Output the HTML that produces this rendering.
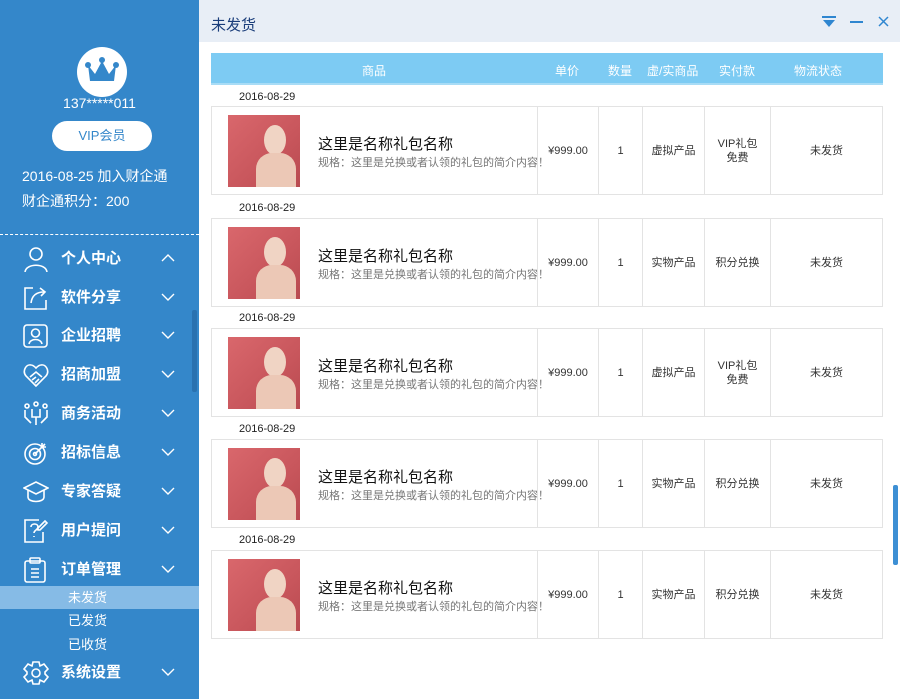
<!DOCTYPE html>
<html><head><meta charset="utf-8"><style>
*{margin:0;padding:0;box-sizing:border-box}
body{width:900px;height:699px;overflow:hidden;font-family:"Liberation Sans","Noto Sans CJK SC",sans-serif;background:#fff;position:relative}
.sb{position:absolute;left:0;top:0;width:199px;height:699px;background:#3487ca;color:#fff}
.a{position:absolute}
.menu{position:absolute;left:0;width:199px;height:30px}
.menu .t{position:absolute;left:61px;top:3px;font-size:15px;font-weight:bold}
.menu svg.ic{position:absolute;left:23px;top:2px}
.menu .ch{position:absolute;left:160px;top:9px}
.sub{position:absolute;left:0;width:199px;height:23px;font-size:13px;padding-left:68px;line-height:23px}
.main{position:absolute;left:199px;top:0;width:701px;height:699px}
.hdr{position:absolute;left:0;top:0;width:701px;height:42px;background:#e8eef6}
.th{position:absolute;left:12px;top:53px;width:672px;height:32px;background:#7dcbf3;color:#fff;font-size:12px;border-bottom:2px solid #a8dcf6}
.th span{position:absolute;top:9px}
.date{position:absolute;left:40px;font-size:11px;color:#222}
.row{position:absolute;left:12px;width:672px;height:89px;border:1px solid #e3e3e3;font-size:11px;color:#333}
.row .c{position:absolute;top:0;height:87px;border-left:1px solid #e3e3e3;display:flex;align-items:center;justify-content:center;text-align:center;line-height:14px}
.img{position:absolute;left:16px;top:8px;width:72px;height:72px;background:linear-gradient(135deg,#d9676c,#c8565c 60%,#b84a50);overflow:hidden}
.img:before{content:"";position:absolute;left:36px;top:10px;width:22px;height:30px;border-radius:50%;background:#f0d4c4}
.img:after{content:"";position:absolute;left:28px;top:38px;width:40px;height:40px;border-radius:40% 40% 0 0;background:#ecc8b6}
.nm{position:absolute;left:106px;top:26px;font-size:15px;color:#111}
.sp{position:absolute;left:106px;top:47px;font-size:11px;color:#777}
</style></head><body>
<div class="sb">
 <div class="a" style="left:77px;top:47px;width:50px;height:50px;border-radius:50%;background:#fff"></div>
 <svg class="a" style="left:84px;top:55px" width="36" height="30" viewBox="0 0 36 30"><path d="M4 10 L11 19 L18 6 L25 19 L32 10 L30 26 L6 26Z" fill="#3487ca"/><circle cx="4" cy="10" r="3" fill="#3487ca"/><circle cx="18" cy="5" r="3" fill="#3487ca"/><circle cx="32" cy="10" r="3" fill="#3487ca"/></svg>
 <div class="a" style="left:0;width:199px;top:95px;text-align:center;font-size:14px">137*****011</div>
 <div class="a" style="left:52px;top:121px;width:100px;height:30px;border-radius:15px;background:#fff;color:#3487ca;font-size:13px;text-align:center;line-height:30px">VIP会员</div>
 <div class="a" style="left:22px;top:166px;font-size:14px">2016-08-25 加入财企通</div>
 <div class="a" style="left:22px;top:191px;font-size:14px">财企通积分：200</div>
 <div class="a" style="left:0;top:234px;width:199px;border-top:1px dashed #fff"></div>
 <div class="a" style="left:192px;top:310px;width:5px;height:82px;background:#2a72b0;border-radius:2px"></div>

 <div class="menu" style="top:244px"><svg class="ic" width="26" height="26" fill="none" stroke="#fff" stroke-width="1.6"><circle cx="13" cy="8" r="6"/><path d="M2 26 C3 17 23 17 24 26"/></svg><span class="t">个人中心</span><svg class="ch" width="16" height="10" fill="none" stroke="#fff" stroke-width="1.4"><path d="M2 8 L8 2 L14 8"/></svg></div>
 <div class="menu" style="top:283px"><svg class="ic" width="26" height="26" fill="none" stroke="#fff" stroke-width="1.6"><path d="M10 3 H2 V24 H23 V15"/><path d="M8 18 C9 10 14 7 21 7"/><path d="M17 3 L22 7 L18 11"/></svg><span class="t">软件分享</span><svg class="ch" width="16" height="10" fill="none" stroke="#fff" stroke-width="1.4"><path d="M2 2 L8 8 L14 2"/></svg></div>
 <div class="menu" style="top:321px"><svg class="ic" width="26" height="26" fill="none" stroke="#fff" stroke-width="1.6"><rect x="1" y="2" width="23" height="22" rx="3"/><circle cx="12.5" cy="10" r="4"/><path d="M6 21 C7 15 18 15 19 21"/></svg><span class="t">企业招聘</span><svg class="ch" width="16" height="10" fill="none" stroke="#fff" stroke-width="1.4"><path d="M2 2 L8 8 L14 2"/></svg></div>
 <div class="menu" style="top:360px"><svg class="ic" width="26" height="26" fill="none" stroke="#fff" stroke-width="1.6"><path d="M13 24 L3 14 C-1 9 3 2 8 3 C10 3 12 5 13 6 C14 5 16 3 18 3 C23 2 27 9 23 14Z"/><path d="M7 15 L13 10 L19 15 M9 18 L13 15 M12 21 L16 17"/></svg><span class="t">招商加盟</span><svg class="ch" width="16" height="10" fill="none" stroke="#fff" stroke-width="1.4"><path d="M2 2 L8 8 L14 2"/></svg></div>
 <div class="menu" style="top:399px"><svg class="ic" width="26" height="26" fill="none" stroke="#fff" stroke-width="1.6"><circle cx="4" cy="5" r="2"/><circle cx="13" cy="3" r="2"/><circle cx="22" cy="5" r="2"/><path d="M2 9 V16 L8 22 M24 9 V16 L18 22 M9 8 V16 H17 V8 M13 16 V24"/></svg><span class="t">商务活动</span><svg class="ch" width="16" height="10" fill="none" stroke="#fff" stroke-width="1.4"><path d="M2 2 L8 8 L14 2"/></svg></div>
 <div class="menu" style="top:438px"><svg class="ic" width="26" height="26" fill="none" stroke="#fff" stroke-width="1.6"><circle cx="12" cy="14" r="10"/><circle cx="12" cy="14" r="5.5"/><circle cx="12" cy="14" r="1.5"/><path d="M12 14 L22 4 M19 3 V7 H23"/></svg><span class="t">招标信息</span><svg class="ch" width="16" height="10" fill="none" stroke="#fff" stroke-width="1.4"><path d="M2 2 L8 8 L14 2"/></svg></div>
 <div class="menu" style="top:477px"><svg class="ic" width="26" height="26" fill="none" stroke="#fff" stroke-width="1.6"><path d="M1 9 L13 3 L25 9 L13 15Z"/><path d="M5 11 V18 C5 24 21 24 21 18 V11"/></svg><span class="t">专家答疑</span><svg class="ch" width="16" height="10" fill="none" stroke="#fff" stroke-width="1.4"><path d="M2 2 L8 8 L14 2"/></svg></div>
 <div class="menu" style="top:516px"><svg class="ic" width="26" height="26" fill="none" stroke="#fff" stroke-width="1.6"><path d="M20 14 V24 H2 V2 H16"/><path d="M8 9 C8 5 15 5 15 9 C15 12 11 12 11 15 M11 18 V19"/><path d="M22 3 L24 5 L17 12 L15 12 L15 10Z"/></svg><span class="t">用户提问</span><svg class="ch" width="16" height="10" fill="none" stroke="#fff" stroke-width="1.4"><path d="M2 2 L8 8 L14 2"/></svg></div>
 <div class="menu" style="top:555px"><svg class="ic" width="26" height="26" fill="none" stroke="#fff" stroke-width="1.6"><rect x="2" y="4" width="20" height="21" rx="2"/><rect x="7" y="1" width="10" height="5" rx="1"/><path d="M8 12 H16 M8 16 H16 M8 20 H16"/></svg><span class="t">订单管理</span><svg class="ch" width="16" height="10" fill="none" stroke="#fff" stroke-width="1.4"><path d="M2 2 L8 8 L14 2"/></svg></div>
 <div class="sub" style="top:586px;background:#86bbe6">未发货</div>
 <div class="sub" style="top:609px">已发货</div>
 <div class="sub" style="top:633px">已收货</div>
 <div class="menu" style="top:658px"><svg class="ic" width="26" height="26" fill="none" stroke="#fff" stroke-width="1.6"><path d="M10 2 H16 L17 6 L21 4 L25 9 L22 12 V14 L25 17 L21 22 L17 20 L16 24 H10 L9 20 L5 22 L1 17 L4 14 V12 L1 9 L5 4 L9 6Z"/><circle cx="13" cy="13" r="4"/></svg><span class="t">系统设置</span><svg class="ch" width="16" height="10" fill="none" stroke="#fff" stroke-width="1.4"><path d="M2 2 L8 8 L14 2"/></svg></div>
</div>

<div class="main">
 <div class="hdr"><div class="a" style="left:12px;top:14px;font-size:15px;color:#1a3d7a">未发货</div>
  <svg class="a" style="left:623px;top:16px" width="14" height="12"><rect x="0" y="0" width="14" height="2" fill="#2f86d0"/><path d="M1 4 H13 L7 11Z" fill="#2f86d0"/></svg>
  <div class="a" style="left:651px;top:21px;width:13px;height:2px;background:#2f86d0"></div>
  <svg class="a" style="left:679px;top:16px" width="11" height="11" stroke="#2f86d0" stroke-width="1.5"><path d="M1 1 L10 10 M10 1 L1 10"/></svg>
 </div>
 <div class="a" style="left:694px;top:485px;width:5px;height:80px;background:#3d8fd4;border-radius:2px"></div>
 <div class="th"><span style="left:151px">商品</span><span style="left:344px">单价</span><span style="left:397px">数量</span><span style="left:436px">虚/实商品</span><span style="left:508px">实付款</span><span style="left:583px">物流状态</span></div>
 
 <div class="date" style="top:91px">2016-08-29</div>
 <div class="row" style="top:106px"><div class="img"></div><div class="nm">这里是名称礼包名称</div><div class="sp">规格：这里是兑换或者认领的礼包的简介内容！</div>
 <div class="c" style="left:325px;width:61px">¥999.00</div><div class="c" style="left:386px;width:44px">1</div><div class="c" style="left:430px;width:62px">虚拟产品</div><div class="c" style="left:492px;width:66px">VIP礼包<br>免费</div><div class="c" style="left:558px;width:112px">未发货</div></div>

 <div class="date" style="top:202px">2016-08-29</div>
 <div class="row" style="top:218px"><div class="img"></div><div class="nm">这里是名称礼包名称</div><div class="sp">规格：这里是兑换或者认领的礼包的简介内容！</div>
 <div class="c" style="left:325px;width:61px">¥999.00</div><div class="c" style="left:386px;width:44px">1</div><div class="c" style="left:430px;width:62px">实物产品</div><div class="c" style="left:492px;width:66px">积分兑换</div><div class="c" style="left:558px;width:112px">未发货</div></div>

 <div class="date" style="top:312px">2016-08-29</div>
 <div class="row" style="top:328px"><div class="img"></div><div class="nm">这里是名称礼包名称</div><div class="sp">规格：这里是兑换或者认领的礼包的简介内容！</div>
 <div class="c" style="left:325px;width:61px">¥999.00</div><div class="c" style="left:386px;width:44px">1</div><div class="c" style="left:430px;width:62px">虚拟产品</div><div class="c" style="left:492px;width:66px">VIP礼包<br>免费</div><div class="c" style="left:558px;width:112px">未发货</div></div>

 <div class="date" style="top:423px">2016-08-29</div>
 <div class="row" style="top:439px"><div class="img"></div><div class="nm">这里是名称礼包名称</div><div class="sp">规格：这里是兑换或者认领的礼包的简介内容！</div>
 <div class="c" style="left:325px;width:61px">¥999.00</div><div class="c" style="left:386px;width:44px">1</div><div class="c" style="left:430px;width:62px">实物产品</div><div class="c" style="left:492px;width:66px">积分兑换</div><div class="c" style="left:558px;width:112px">未发货</div></div>

 <div class="date" style="top:534px">2016-08-29</div>
 <div class="row" style="top:550px"><div class="img"></div><div class="nm">这里是名称礼包名称</div><div class="sp">规格：这里是兑换或者认领的礼包的简介内容！</div>
 <div class="c" style="left:325px;width:61px">¥999.00</div><div class="c" style="left:386px;width:44px">1</div><div class="c" style="left:430px;width:62px">实物产品</div><div class="c" style="left:492px;width:66px">积分兑换</div><div class="c" style="left:558px;width:112px">未发货</div></div>
</div>
</body></html>
